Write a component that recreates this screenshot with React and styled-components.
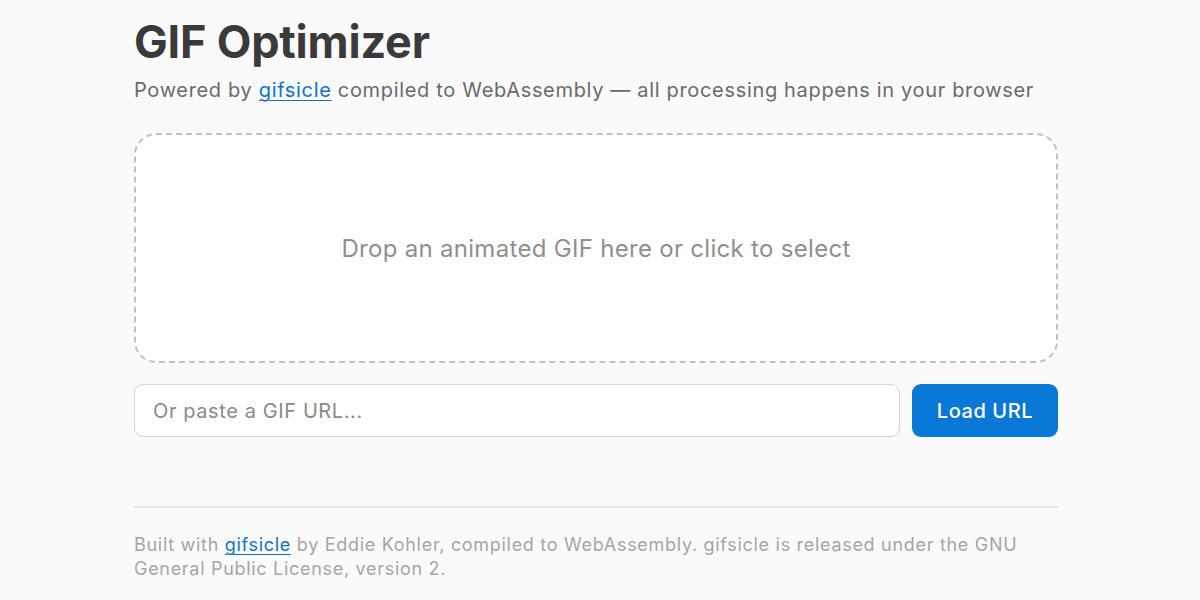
import React from "react";
import styled, { createGlobalStyle } from "styled-components";

const Global = createGlobalStyle`
  html, body {
    margin: 0;
    padding: 0;
    background: #fafafa;
  }
  body {
    padding-right: 8px;
    font-family: Inter, "Noto Sans", "Liberation Sans", sans-serif;
    color: #333;
  }
`;

const App = () => {
  return (
    <>
      <Global />
      <Page>
        <Title>GIF Optimizer</Title>
        <Subtitle>
          Powered by <Link href="#">gifsicle</Link> compiled to WebAssembly — all
          processing happens in your browser
        </Subtitle>
        <DropZone>Drop an animated GIF here or click to select</DropZone>
        <UrlRow>
          <UrlInput placeholder="Or paste a GIF URL..." />
          <LoadButton>Load URL</LoadButton>
        </UrlRow>
        <Footer>
          Built with <Link href="#">gifsicle</Link> by Eddie Kohler, compiled to
          WebAssembly. gifsicle is released under the GNU General Public
          License, version 2.
        </Footer>
      </Page>
    </>
  );
};

export default App;

const Page = styled.div`
  max-width: 924px;
  margin: 0 auto;
  padding-top: 14px;
`;

const Title = styled.h1`
  margin: 0;
  font-size: 45px;
  font-weight: 700;
  line-height: 56px;
  color: #3a3a3a;
  letter-spacing: -0.2px;
`;

const Subtitle = styled.p`
  margin: 6px 0 0;
  font-size: 20px;
  line-height: 28px;
  color: #6a6a6a;
  letter-spacing: 0.67px;
`;

const Link = styled.a`
  color: #0a74d0;
  text-decoration: underline;
  text-underline-offset: 3px;
  text-decoration-thickness: 1px;
`;

const DropZone = styled.div`
  margin-top: 29px;
  height: 230px;
  box-sizing: border-box;
  border: 2px dashed #c2c2c2;
  border-radius: 22px;
  background: #fff;
  display: flex;
  align-items: center;
  justify-content: center;
  font-size: 24px;
  letter-spacing: 0.3px;
  color: #8f8f8f;
  cursor: pointer;
`;

const UrlRow = styled.div`
  margin-top: 21px;
  display: flex;
  gap: 12px;
`;

const UrlInput = styled.input`
  flex: 1;
  height: 53px;
  box-sizing: border-box;
  border: 1px solid #d6d6d6;
  border-radius: 9px;
  background: #fff;
  padding: 0 18px;
  font-family: inherit;
  font-size: 20px;
  letter-spacing: 0.6px;
  color: #333;
  outline: none;
  &::placeholder {
    color: #8a8a8a;
  }
`;

const LoadButton = styled.button`
  width: 146px;
  height: 53px;
  border: none;
  border-radius: 9px;
  background: #0a78d6;
  color: #fff;
  font-family: inherit;
  font-size: 20px;
  font-weight: 500;
  letter-spacing: 0.6px;
  cursor: pointer;
`;

const Footer = styled.footer`
  margin-top: 69px;
  padding-top: 25px;
  border-top: 2px solid #e6e6e6;
  font-size: 18px;
  line-height: 24px;
  letter-spacing: 0.7px;
  color: #a6a6a6;
`;
